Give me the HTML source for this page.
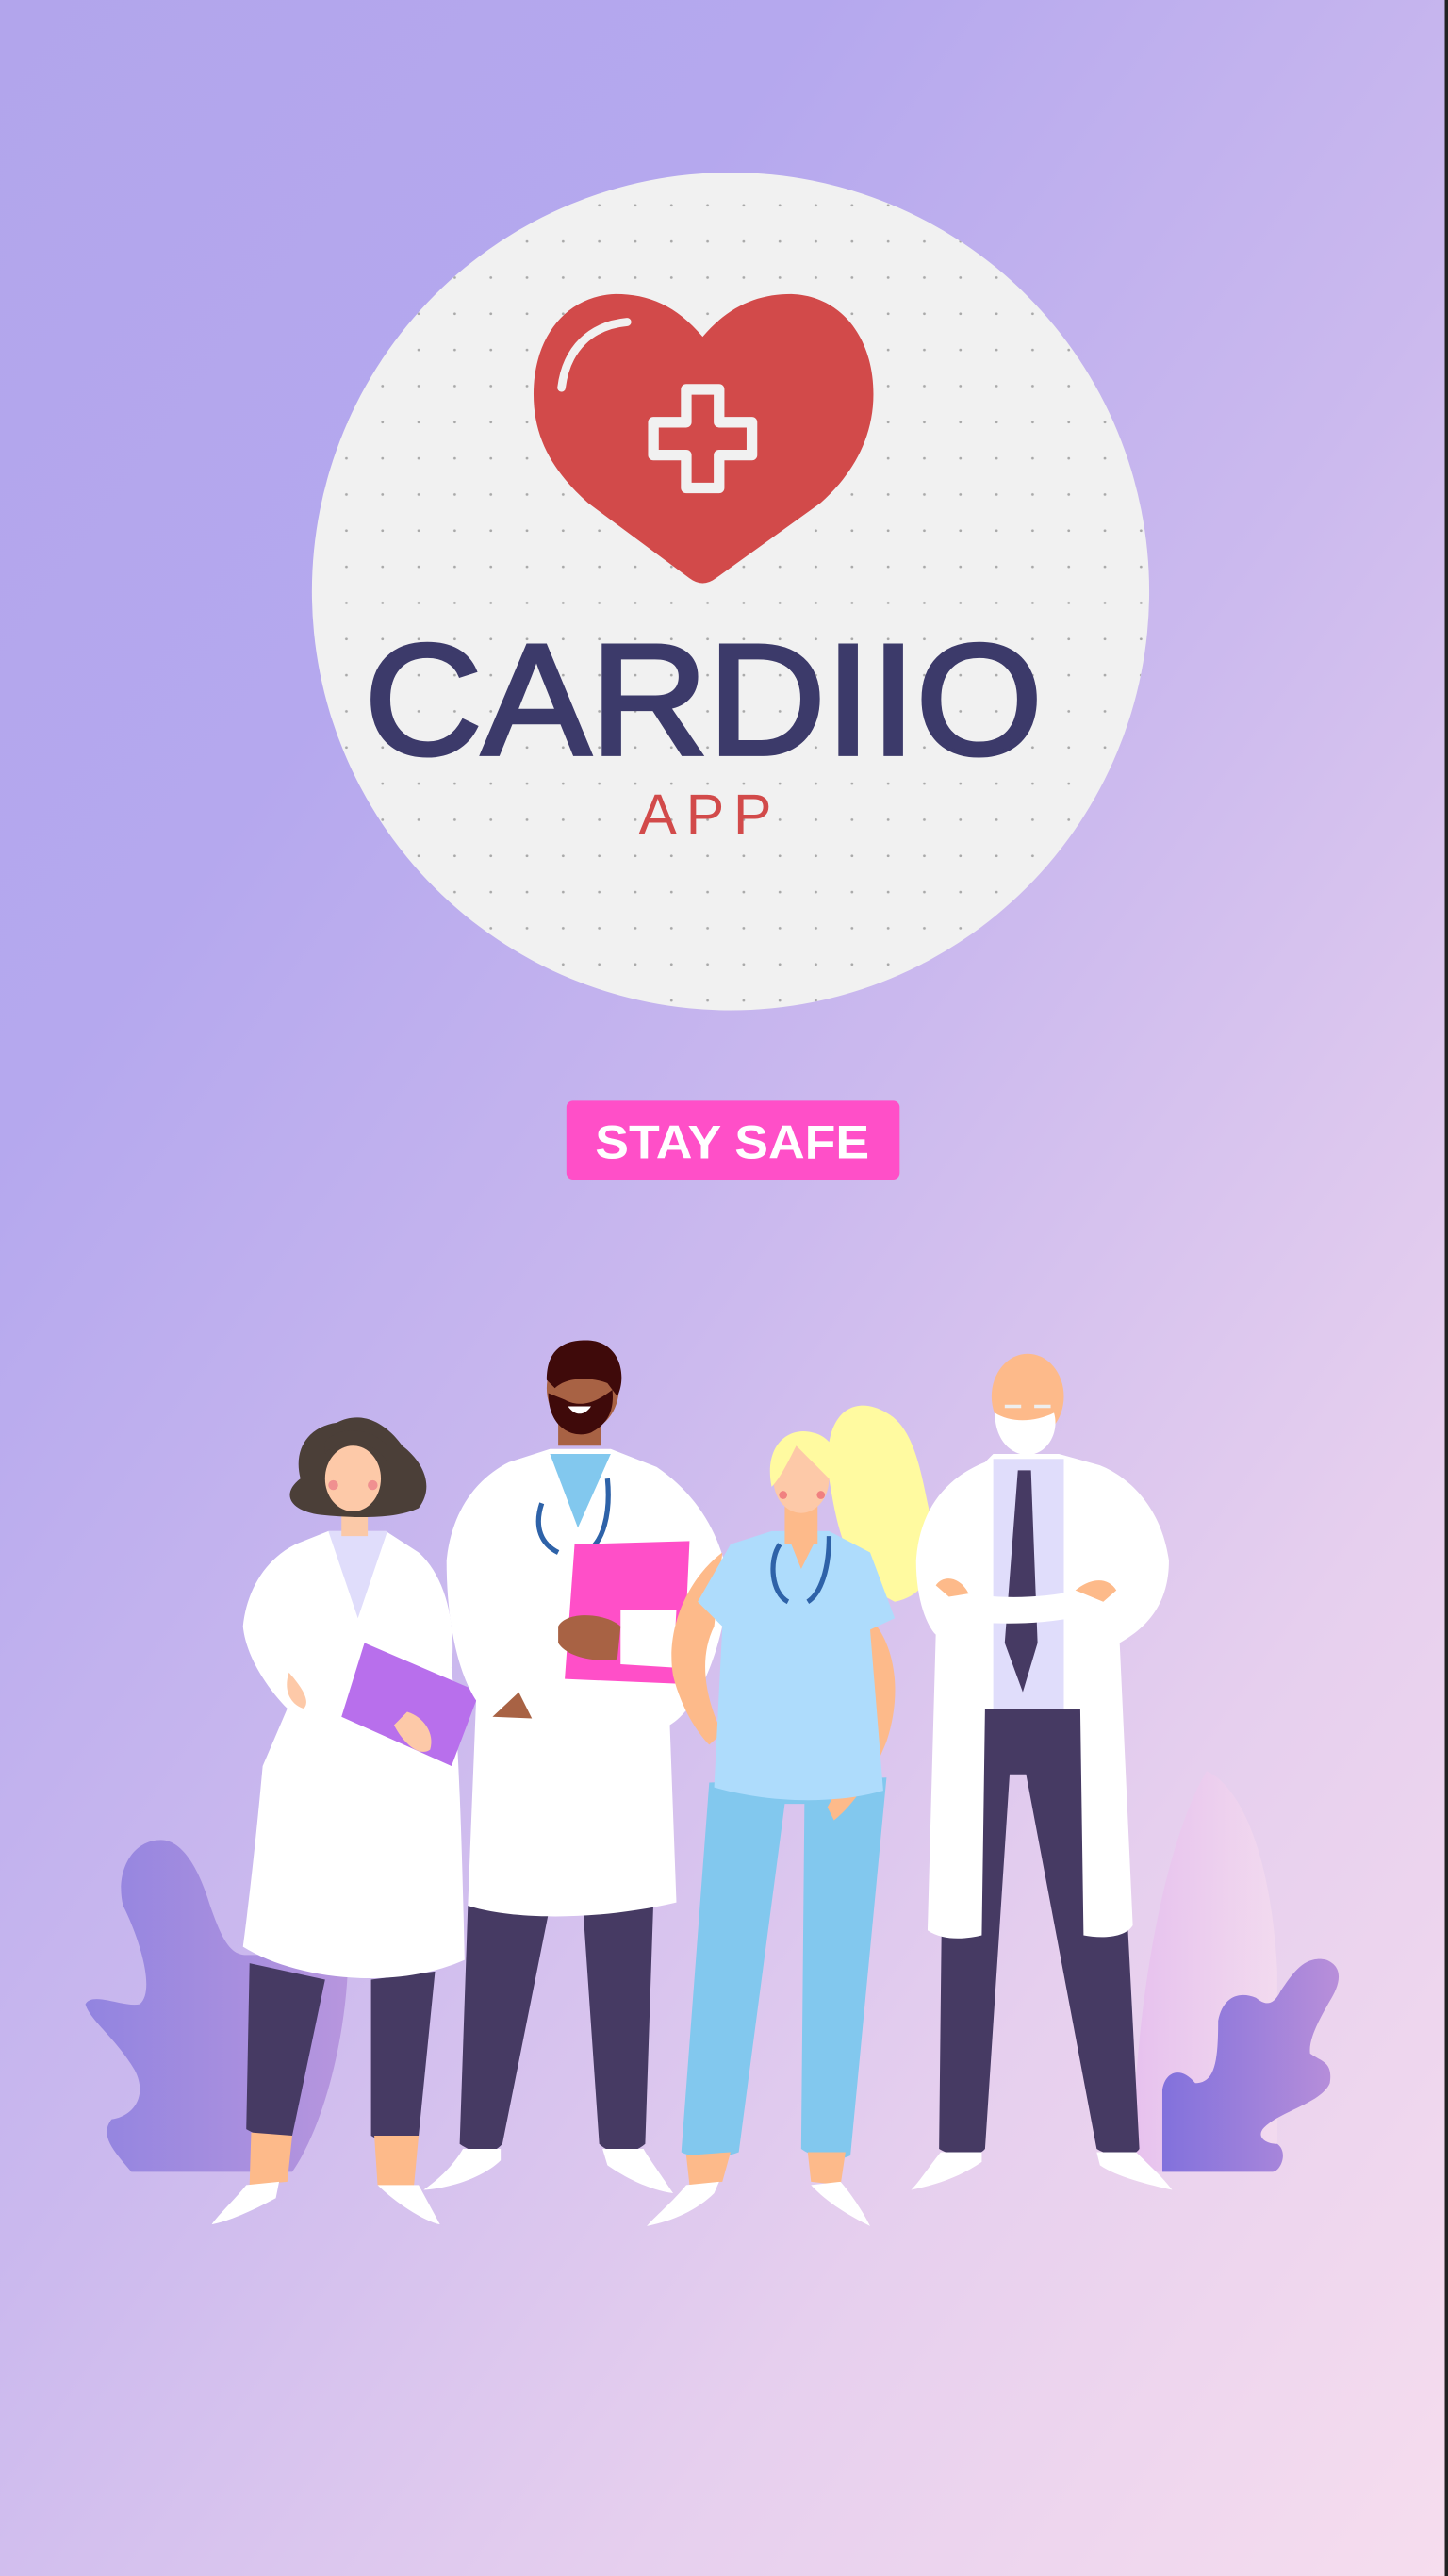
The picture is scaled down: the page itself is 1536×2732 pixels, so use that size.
<!DOCTYPE html>
<html><head><meta charset="utf-8"><style>
html,body{margin:0;padding:0;width:1536px;height:2732px;overflow:hidden}
svg{display:block}
</style></head><body>
<svg width="1536" height="2732" viewBox="0 0 882 1568" preserveAspectRatio="none" xmlns="http://www.w3.org/2000/svg">
<defs>
<linearGradient id="bg" gradientUnits="userSpaceOnUse" x1="0" y1="0" x2="1326" y2="947">
<stop offset="0" stop-color="#b2a5ec"/><stop offset="0.25" stop-color="#b5a8ee"/><stop offset="0.5" stop-color="#cbb9ee"/><stop offset="0.75" stop-color="#e6cfee"/><stop offset="1" stop-color="#f6ddee"/></linearGradient>
<linearGradient id="pl" x1="0" y1="0" x2="1" y2="0"><stop offset="0" stop-color="#9284e0"/><stop offset="1" stop-color="#b796de"/></linearGradient>
<linearGradient id="pr" x1="0" y1="0" x2="1" y2="0"><stop offset="0" stop-color="#8271dc"/><stop offset="1" stop-color="#b88fda"/></linearGradient>
<linearGradient id="pale" x1="0" y1="0" x2="1" y2="0"><stop offset="0" stop-color="#e6bdee"/><stop offset="1" stop-color="#f4dcef"/></linearGradient>
<pattern id="dots" width="22" height="22" patternUnits="userSpaceOnUse" x="2" y="4"><circle cx="11" cy="11" r="0.8" fill="#a9a9a9"/></pattern>
<clipPath id="cc"><circle cx="445" cy="360" r="255"/></clipPath>
</defs>
<rect width="882" height="1568" fill="url(#bg)"/>
<rect x="880" y="0" width="2" height="1568" fill="#222"/>
<circle cx="445" cy="360" r="255" fill="#f1f1f1"/>
<rect x="190" y="100" width="520" height="520" fill="url(#dots)" clip-path="url(#cc)"/>
<path d="M428,205 C412,186 395,179 375,179 C345,180 325,205 325,240 C325,268 338,288 358,306 L420,352 Q428,358 436,352 L500,306 C518,290 532,268 532,240 C532,205 512,180 482,179 C462,179 444,186 428,205Z" fill="#d24a4a"/>
<path d="M342,236 C345,212 360,198 382,196" stroke="#f1f1f1" stroke-width="5" fill="none" stroke-linecap="round"/>
<path d="M418,237 h20 v20 h20 v20 h-20 v20 h-20 v-20 h-20 v-20 h20z" fill="none" stroke="#f1f1f1" stroke-width="6.5" stroke-linejoin="round"/>
<text x="222" y="459" font-family="Liberation Sans, sans-serif" font-size="96" fill="#3c3a6a" stroke="#3c3a6a" stroke-width="2.5" textLength="413" lengthAdjust="spacingAndGlyphs">CARDIIO</text>
<text x="389" y="508" font-family="Liberation Sans, sans-serif" font-size="35" fill="#d24a4a" textLength="81" lengthAdjust="spacing">APP</text>
<rect x="345" y="670" width="203" height="48" rx="4" fill="#ff4fc8"/>
<text x="446" y="705" text-anchor="middle" font-family="Liberation Sans, sans-serif" font-weight="bold" font-size="29" fill="#fff" textLength="167" lengthAdjust="spacingAndGlyphs">STAY SAFE</text>

<path d="M80,1322 C70,1310 60,1300 68,1290 C82,1288 90,1275 82,1260 C70,1240 55,1230 52,1220 C56,1212 75,1222 85,1220 C95,1212 85,1180 75,1160 C70,1140 80,1120 98,1120 C112,1120 122,1140 128,1160 C135,1180 140,1190 150,1190 C165,1190 180,1190 195,1180 L212,1190 C212,1230 200,1290 178,1322Z" fill="url(#pl)"/>
<path d="M690,1322 C690,1220 710,1120 735,1078 C760,1090 775,1140 778,1200 L778,1322Z" fill="url(#pale)" opacity="0.8"/>
<path d="M708,1322 L708,1272 C710,1260 720,1258 728,1268 C740,1268 742,1255 742,1230 C745,1215 755,1212 765,1216 C770,1220 775,1222 780,1212 C788,1200 795,1190 808,1193 C820,1198 815,1210 810,1218 C802,1232 797,1242 798,1250 C805,1255 812,1255 810,1268 C805,1280 780,1285 770,1295 C765,1300 770,1305 778,1305 C785,1310 780,1322 775,1322Z" fill="url(#pr)"/>

<path d="M152,1195 L150,1296 C160,1302 170,1302 178,1300 L198,1205Z" fill="#463a63"/>
<path d="M226,1205 L226,1300 C235,1306 248,1305 255,1300 L265,1200Z" fill="#463a63"/>
<path d="M153,1298 L152,1330 L175,1328 L178,1300Z M228,1300 L230,1330 L252,1332 L255,1300Z" fill="#fdba8a"/>
<path d="M150,1330 C142,1340 133,1348 129,1354 C140,1352 155,1345 168,1338 L170,1328Z M230,1330 C240,1340 258,1352 268,1354 L255,1330Z" fill="#fff"/>
<path d="M180,940 C160,950 150,970 148,990 C150,1010 165,1030 175,1040 L160,1075 C155,1130 150,1170 148,1185 C180,1205 240,1212 283,1193 C282,1150 280,1060 275,1015 C278,990 272,960 255,945 L235,932 L200,932Z" fill="#fff"/>
<path d="M200,932 L218,985 L236,932Z" fill="#e0ddfb"/>
<path d="M208,915 h16 v20 h-16z" fill="#fbc9a8"/>
<path d="M183,900 C170,910 178,920 195,922 C215,924 240,925 255,918 C265,905 258,890 245,880 C235,866 220,858 205,866 C190,868 178,880 183,900Z" fill="#4b3f38"/>
<ellipse cx="215" cy="900" rx="17" ry="20" fill="#fdc9a8"/>
<path d="M198,885 C205,875 228,875 236,890 L236,880 C225,868 205,868 198,878Z" fill="#4b3f38"/>
<circle cx="203" cy="904" r="3" fill="#f09090"/><circle cx="227" cy="904" r="3" fill="#f09090"/>
<path d="M222,1000 L292,1030 L275,1075 L208,1045Z" fill="#b86fec"/>
<path d="M240,1050 C245,1060 255,1070 262,1065 C265,1055 258,1045 248,1042Z" fill="#fdc9a8"/>
<path d="M176,1018 C182,1025 190,1035 185,1040 C178,1038 172,1030 176,1018Z" fill="#fdc9a8"/>

<path d="M285,1160 L280,1305 C290,1312 300,1312 306,1305 L335,1160Z M355,1160 L365,1305 C372,1312 385,1312 393,1305 L398,1158Z" fill="#463a63"/>
<path d="M282,1308 C275,1320 265,1328 258,1333 C275,1332 295,1325 305,1315 L305,1308Z M367,1308 L370,1318 C380,1325 395,1333 410,1335 C400,1320 394,1312 392,1308Z" fill="#fff"/>
<path d="M310,890 C290,900 275,920 272,950 C272,990 280,1020 290,1035 L285,1160 C310,1168 360,1170 412,1158 L408,1050 C425,1040 440,1005 444,965 C440,935 425,910 400,893 L372,882 L335,882Z" fill="#fff"/>
<path d="M335,885 L352,930 L372,885Z" fill="#82c8ee"/>
<path d="M340,880 h26 v-25 h-26z" fill="#a86244"/>
<ellipse cx="355" cy="845" rx="22" ry="26" fill="#a86244"/>
<path d="M333,840 C333,820 345,815 360,816 C378,818 382,838 376,850 L370,842 C360,838 345,838 338,845Z" fill="#3f0a0a"/>
<path d="M334,848 C334,870 350,876 360,872 C372,866 374,856 373,846 C365,852 355,858 344,852Z" fill="#3f0a0a"/>
<path d="M346,856 C350,862 356,862 360,856Z" fill="#fff"/>
<path d="M330,915 C325,930 330,940 340,945 M370,900 C372,920 368,940 356,945" stroke="#2e62a8" stroke-width="3" fill="none"/>
<path d="M350,940 L420,938 L416,1025 L344,1022Z" fill="#ff4fc8"/>
<path d="M378,980 L412,980 L410,1015 L378,1013Z" fill="#fff"/>
<path d="M340,990 C345,980 370,982 378,990 L376,1010 C360,1012 345,1008 340,1000Z" fill="#a86244"/>
<path d="M300,1045 L316,1030 L324,1046Z" fill="#a86244"/>

<path d="M540,860 C520,848 500,860 505,900 C510,930 515,960 545,975 C570,970 572,945 565,915 C560,890 555,868 540,860Z" fill="#fffaa0"/>
<path d="M432,1085 L415,1310 C425,1315 440,1314 450,1310 L478,1098 L490,1098 L488,1308 C498,1315 510,1316 518,1312 L540,1082Z" fill="#82c8ee"/>
<path d="M418,1312 L420,1330 L440,1328 L445,1310Z M492,1310 L494,1328 L512,1330 L515,1310Z" fill="#fdba8a"/>
<path d="M418,1330 C410,1340 398,1350 394,1355 C410,1352 425,1345 435,1335 L438,1328Z M494,1330 C505,1342 520,1350 530,1355 C525,1345 518,1335 512,1328Z" fill="#fff"/>
<path d="M440,945 C420,960 405,990 410,1020 C415,1040 425,1055 432,1062 L440,1055 C430,1035 425,1010 435,990Z" fill="#fdba8a"/>
<path d="M530,985 C545,1000 550,1030 540,1060 C530,1085 518,1100 508,1108 L504,1100 C515,1080 525,1060 526,1030Z" fill="#fdba8a"/>
<path d="M445,940 L470,932 L505,932 L530,945 L545,985 L530,992 L538,1090 C510,1098 470,1098 435,1088 L440,990 L425,975 Z" fill="#aedcfc"/>
<path d="M478,915 h20 v25 h-20z" fill="#fdba8a"/>
<path d="M480,935 L488,955 L498,935Z" fill="#fdba8a"/>
<ellipse cx="488" cy="900" rx="17" ry="21" fill="#fdc9a8"/>
<path d="M470,905 C465,880 480,868 495,872 C510,875 515,895 510,905 C500,895 490,885 485,880 C480,890 475,900 470,905Z" fill="#fffaa0"/>
<circle cx="477" cy="910" r="2.5" fill="#f08080"/><circle cx="500" cy="910" r="2.5" fill="#f08080"/>
<path d="M475,940 C468,950 470,970 480,975 M505,935 C505,955 500,970 492,975" stroke="#2e62a8" stroke-width="3" fill="none"/>

<path d="M575,1040 L572,1308 C582,1314 595,1314 600,1308 L615,1080 L625,1080 L668,1308 C678,1314 690,1314 694,1308 L680,1040Z" fill="#463a63"/>
<path d="M573,1310 C565,1320 560,1328 555,1333 C570,1330 585,1325 598,1316 L598,1310Z M668,1310 L670,1318 C680,1325 700,1330 714,1333 C708,1325 700,1318 692,1310Z" fill="#fff"/>
<path d="M600,890 C575,900 560,920 558,950 C558,975 565,990 570,995 L565,1175 C575,1182 590,1180 598,1178 L600,1040 L658,1040 L660,1178 C670,1180 685,1180 690,1172 L682,1000 C700,990 712,975 712,950 C708,920 690,900 670,892 L645,885 L605,885Z" fill="#fff"/>
<path d="M605,888 L605,1040 L648,1040 L648,888Z" fill="#e0ddfb"/>
<path d="M620,895 L628,895 L632,1000 L623,1030 L612,1000Z" fill="#463a63"/>
<path d="M570,965 C600,975 640,975 680,962 L680,978 C645,990 605,990 575,985Z" fill="#fff"/>
<path d="M655,968 C665,960 675,960 680,968 L672,975Z M570,965 C575,958 585,960 590,970 L578,972Z" fill="#fdba8a"/>
<ellipse cx="626" cy="850" rx="22" ry="26" fill="#fdba8a"/>
<path d="M606,860 C606,880 620,888 630,885 C640,882 645,870 642,860 C630,866 615,866 606,860Z" fill="#fff"/>
<path d="M612,856 h10 M630,856 h10" stroke="#eee" stroke-width="2"/>
</svg>
</body></html>
